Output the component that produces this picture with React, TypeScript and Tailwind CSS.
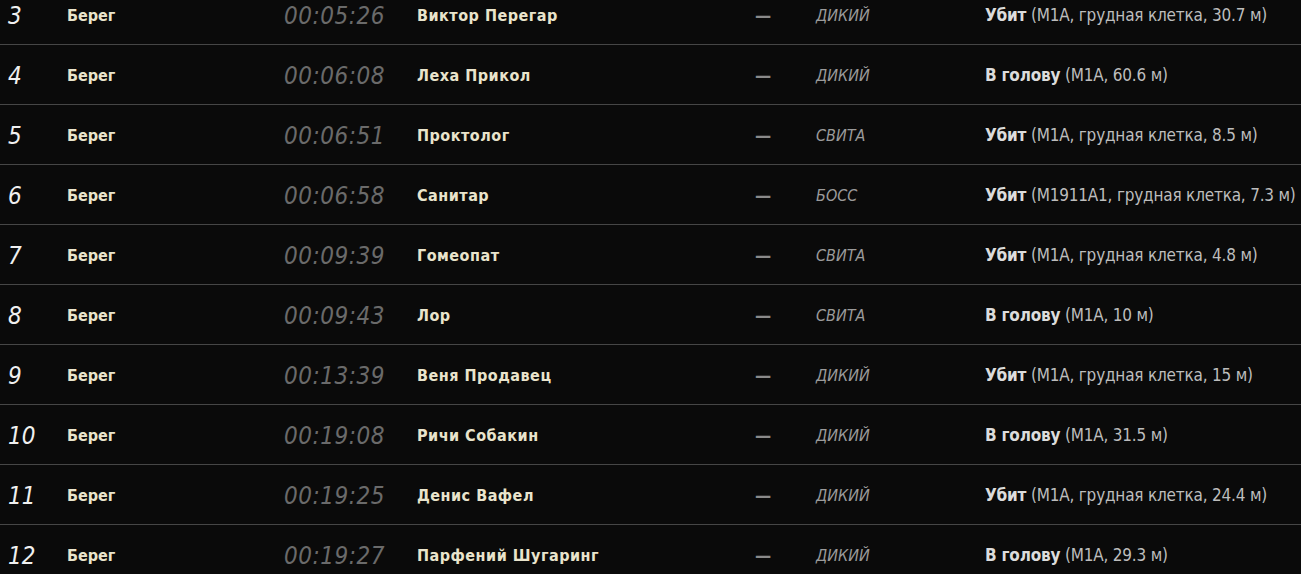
const rows = [
  { n: 3, time: "00:05:26", name: "Виктор Перегар", type: "ДИКИЙ", res: "Убит", det: "(M1A, грудная клетка, 30.7 м)" },
  { n: 4, time: "00:06:08", name: "Леха Прикол", type: "ДИКИЙ", res: "В голову", det: "(M1A, 60.6 м)" },
  { n: 5, time: "00:06:51", name: "Проктолог", type: "СВИТА", res: "Убит", det: "(M1A, грудная клетка, 8.5 м)" },
  { n: 6, time: "00:06:58", name: "Санитар", type: "БОСС", res: "Убит", det: "(M1911A1, грудная клетка, 7.3 м)" },
  { n: 7, time: "00:09:39", name: "Гомеопат", type: "СВИТА", res: "Убит", det: "(M1A, грудная клетка, 4.8 м)" },
  { n: 8, time: "00:09:43", name: "Лор", type: "СВИТА", res: "В голову", det: "(M1A, 10 м)" },
  { n: 9, time: "00:13:39", name: "Веня Продавец", type: "ДИКИЙ", res: "Убит", det: "(M1A, грудная клетка, 15 м)" },
  { n: 10, time: "00:19:08", name: "Ричи Собакин", type: "ДИКИЙ", res: "В голову", det: "(M1A, 31.5 м)" },
  { n: 11, time: "00:19:25", name: "Денис Вафел", type: "ДИКИЙ", res: "Убит", det: "(M1A, грудная клетка, 24.4 м)" },
  { n: 12, time: "00:19:27", name: "Парфений Шугаринг", type: "ДИКИЙ", res: "В голову", det: "(M1A, 29.3 м)" },
];

export default function App() {
  return (
    <div className="h-[574px] w-full overflow-hidden bg-[#0a0a0a] font-['DejaVu_Sans_Condensed','DejaVu_Sans',sans-serif]">
      <div className="-mt-[15px]">
        {rows.map((r) => (
          <div key={r.n} className="flex h-[60px] items-center whitespace-nowrap border-b border-[#464646] pt-[2px]">
            {/* kill number */}
            <div className="w-[67px] shrink-0 pl-[8px] text-[24px] italic font-light text-[#f0f0f0]">{r.n}</div>
            <div className="w-[150px] shrink-0 text-[16px] font-bold text-[#e9e4cc]">Берег</div>
            <div className="w-[168px] shrink-0 text-right text-[24px] italic font-light tracking-[0.5px] text-[#6a6a6a]">{r.time}</div>
            <div className="ml-[32px] w-[338px] shrink-0 text-[16px] font-bold tracking-[0.5px] text-[#e9e4cc]">{r.name}</div>
            <div className="w-[61px] shrink-0 text-[18px] font-bold leading-none text-[#8a8a8a]">—</div>
            <div className="w-[169px] shrink-0 text-[16px] italic text-[#9a9a9a]">{r.type}</div>
            <div className="text-[17px] tracking-[-0.2px] text-[#bdbdbd]">
              <span className="font-bold text-[#dcdcdc]">{r.res}</span> {r.det}
            </div>
          </div>
        ))}
      </div>
    </div>
  );
}
